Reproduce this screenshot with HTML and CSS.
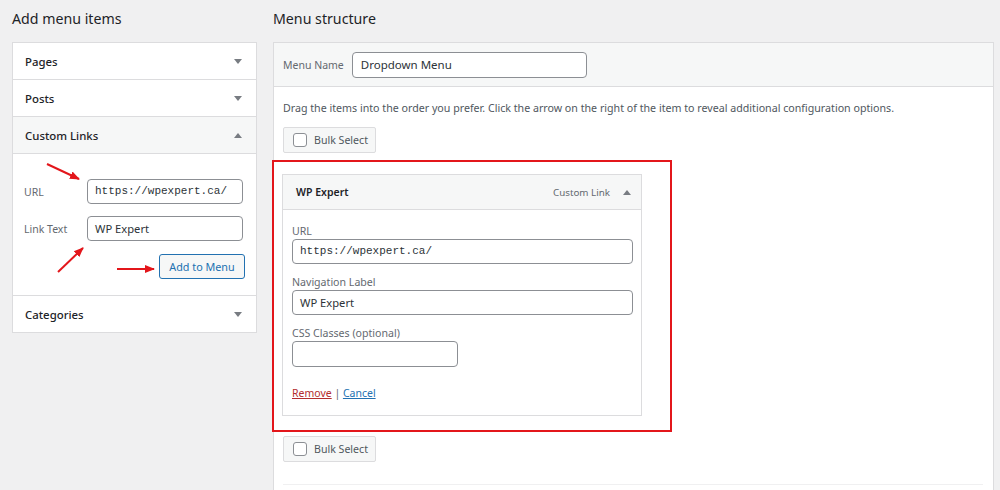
FILE: index.html
```html
<!DOCTYPE html>
<html lang="en">
<head>
<meta charset="utf-8">
<title>Menus</title>
<link rel="stylesheet" href="styles.css">
</head>
<body>
<div class="page">
  <section class="col-left">
    <h2 class="col-title">Add menu items</h2>
    <div class="accordion">
      <div class="acc-row"><span>Pages</span><i class="caret down"></i></div>
      <div class="acc-row"><span>Posts</span><i class="caret down"></i></div>
      <div class="acc-row open"><span>Custom Links</span><i class="caret up"></i></div>
      <div class="acc-body">
        <div class="field-row">
          <label class="side-label">URL</label>
          <div class="input mono">https://wpexpert.ca/</div>
        </div>
        <div class="field-row">
          <label class="side-label">Link Text</label>
          <div class="input">WP Expert</div>
        </div>
        <div class="btn-row"><button class="btn-secondary">Add to Menu</button></div>
      </div>
      <div class="acc-row"><span>Categories</span><i class="caret down"></i></div>
    </div>
  </section>

  <section class="col-right">
    <h2 class="col-title">Menu structure</h2>
    <div class="menu-panel">
      <div class="menu-head">
        <label class="side-label">Menu Name</label>
        <div class="input name-input">Dropdown Menu</div>
      </div>
      <div class="menu-body">
        <p class="hint">Drag the items into the order you prefer. Click the arrow on the right of the item to reveal additional configuration options.</p>
        <div class="bulk"><span class="checkbox"></span>Bulk Select</div>

        <div class="highlight">
          <div class="menu-item">
            <div class="item-bar">
              <span class="item-title">WP Expert</span>
              <span class="item-type">Custom Link</span>
              <i class="caret up"></i>
            </div>
            <div class="item-settings">
              <label class="top-label">URL</label>
              <div class="input wide mono">https://wpexpert.ca/</div>
              <label class="top-label">Navigation Label</label>
              <div class="input wide">WP Expert</div>
              <label class="top-label">CSS Classes (optional)</label>
              <div class="input narrow"></div>
              <p class="actions"><a class="remove">Remove</a> | <a class="cancel">Cancel</a></p>
            </div>
          </div>
        </div>

        <div class="bulk bulk-bottom"><span class="checkbox"></span>Bulk Select</div>
        <div class="menu-foot"></div>
      </div>
    </div>
  </section>
</div>

<svg class="marks" width="1000" height="490" viewBox="0 0 1000 490">
  <defs>
    <marker id="head" viewBox="0 0 10 10" refX="9" refY="5" markerWidth="5" markerHeight="5" orient="auto">
      <path d="M0 1 L10 5 L0 9 Z" fill="#e3161b"/>
    </marker>
  </defs>
  <line x1="47" y1="164" x2="79" y2="179" stroke="#e3161b" stroke-width="2" marker-end="url(#head)"/>
  <line x1="58" y1="272" x2="83" y2="248" stroke="#e3161b" stroke-width="2" marker-end="url(#head)"/>
  <line x1="117" y1="269" x2="154" y2="269" stroke="#e3161b" stroke-width="2" marker-end="url(#head)"/>
</svg>
</body>
</html>
```

FILE: styles.css
```css
* { box-sizing: border-box; }

body {
  margin: 0;
  background: #f0f0f1;
  color: #1d2327;
  font-family: "Noto Sans", "Open Sans", sans-serif;
  font-size: 11px;
  overflow: hidden;
}

.page {
  display: flex;
  gap: 16px;
  padding: 0 6px 0 12px;
  height: 490px;
}

.col-left { width: 245px; flex: none; }
.col-right { flex: 1; min-width: 0; }

.col-title {
  margin: 9px 0 13px;
  font-size: 14.2px;
  line-height: 20px;
  font-weight: 400;
  color: #1d2327;
}

/* accordion of item sources */
.accordion {
  background: #fff;
  border: 1px solid #dcdcde;
}
.acc-row {
  display: flex;
  align-items: center;
  justify-content: space-between;
  height: 37px;
  padding: 0 14px 0 12px;
  border-bottom: 1px solid #dcdcde;
  font-size: 11.4px;
  font-weight: 500;
  color: #1d2327;
}
.acc-row:last-child { border-bottom: 0; height: 36px; }
.acc-row.open { background: #f6f7f7; }

.caret {
  width: 0;
  height: 0;
  border-left: 4px solid transparent;
  border-right: 4px solid transparent;
}
.caret.down { border-top: 5px solid #787c82; }
.caret.up { border-bottom: 5px solid #787c82; }

.acc-body {
  padding: 25px 11px 16px 11px;
  border-bottom: 1px solid #dcdcde;
}
.field-row {
  display: flex;
  align-items: center;
  margin-bottom: 12px;
}
.field-row + .field-row { margin-bottom: 13px; }
.side-label {
  color: #646970;
  font-size: 10.5px;
}
.field-row .side-label { width: 63px; flex: none; }

.input {
  height: 25px;
  border: 1px solid #8c8f94;
  border-radius: 4px;
  background: #fff;
  padding: 0 7px;
  line-height: 23px;
  font-size: 11.2px;
  color: #2c3338;
  white-space: nowrap;
  overflow: hidden;
}
.field-row .input { width: 156px; }
.mono { font-family: "Liberation Mono", "DejaVu Sans Mono", monospace; font-size: 11px; }

.btn-row { display: flex; justify-content: flex-end; }
.btn-secondary {
  width: 86px;
  height: 25px;
  border: 1px solid #2271b1;
  border-radius: 3px;
  background: #f6f7f7;
  color: #2271b1;
  font-family: inherit;
  font-size: 10.8px;
  padding: 0;
}

/* menu structure panel */
.menu-panel {
  background: #fff;
  border: 1px solid #dcdcde;
  height: 460px;
}
.menu-head {
  display: flex;
  align-items: center;
  gap: 8px;
  height: 44px;
  padding: 0 9px;
  background: #f6f7f7;
  border-bottom: 1px solid #dcdcde;
}
.side-label.head-label { font-size: 10.3px; }
.name-input { width: 235px; height: 26px; line-height: 24px; padding: 0 8px; font-size: 11.5px; }

.menu-body { padding: 0 10px 0 9px; }
.hint {
  margin: 13px 0 0;
  line-height: 16px;
  font-size: 10.66px;
  color: #50575e;
}
.bulk {
  display: flex;
  align-items: center;
  gap: 7px;
  width: 93px;
  height: 26px;
  margin-top: 11px;
  padding-left: 9px;
  background: #f6f7f7;
  border: 1px solid #dcdcde;
  border-radius: 2px;
  color: #50575e;
  font-size: 10.6px;
}
.checkbox {
  width: 14px;
  height: 14px;
  border: 1px solid #8c8f94;
  border-radius: 3px;
  background: #fff;
}

.highlight {
  width: 400px;
  margin: 7px 0 0 -11px;
  padding: 12px 28px 14px 8px;
  border: 2px solid #e3161b;
}
.menu-item { border: 1px solid #dcdcde; background: #fff; }
.item-bar {
  display: flex;
  align-items: center;
  height: 35px;
  padding: 0 10px 0 13px;
  background: #f6f7f7;
  border-bottom: 1px solid #dcdcde;
}
.item-title { font-weight: 600; font-size: 10.5px; flex: 1; }
.item-type { color: #646970; font-size: 9.8px; margin-right: 13px; }

.item-settings { padding: 13px 8px 14px 9px; }
.top-label {
  display: block;
  line-height: 16px;
  font-size: 10.6px;
  color: #646970;
}
.top-label + .input { margin-bottom: 10px; }
.input.wide { width: 341px; }
.input.narrow { width: 166px; height: 26px; }
.actions { margin: 18px 0 0; line-height: 16px; font-size: 10.5px; color: #646970; }
.actions a { text-decoration: underline; }
.remove { color: #b32d2e; }
.cancel { color: #2271b1; }

.bulk-bottom { margin-top: 4px; }
.menu-foot {
  margin-top: 22px;
  border-top: 1px solid #f0f0f1;
}

/* annotation arrows drawn over the form */
.marks { position: absolute; top: 0; left: 0; pointer-events: none; }
```
